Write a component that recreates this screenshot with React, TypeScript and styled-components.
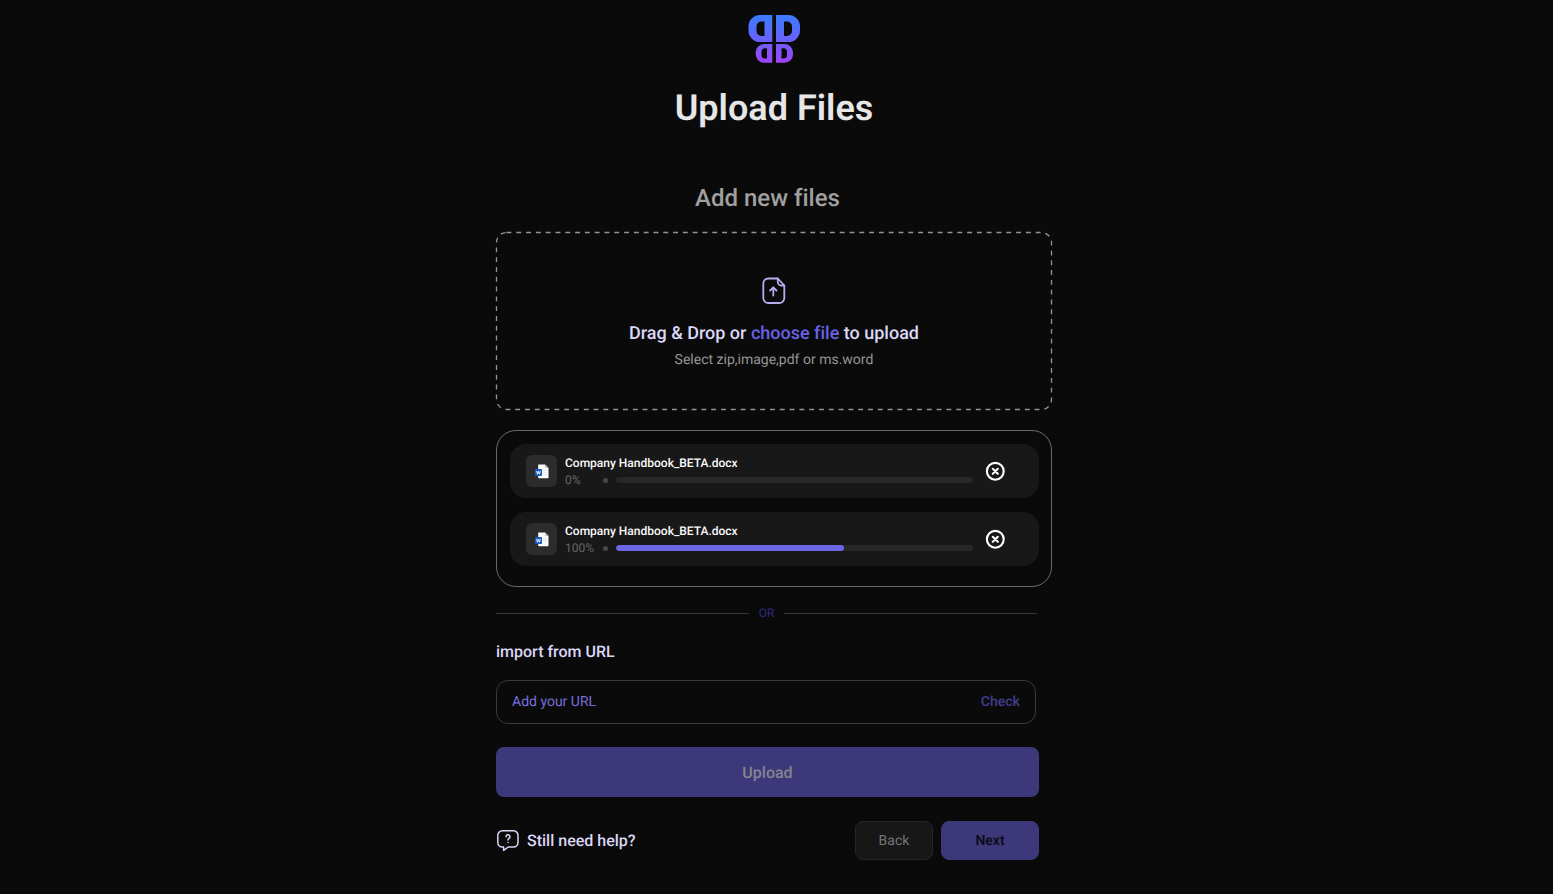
import React, { useState } from 'react';
import styled, { createGlobalStyle } from 'styled-components';

const GlobalStyle = createGlobalStyle`
  *, *::before, *::after { box-sizing: border-box; }
  body {
    margin: 0;
    background: #0a0a0a;
    font-family: Roboto, "Liberation Sans", sans-serif;
    color: #e4e4e4;
    text-rendering: geometricPrecision;
    font-variant-ligatures: none;
  }
  button, input { font-family: inherit; text-rendering: inherit; }
`;

const Page = styled.main`
  min-height: 100vh;
  padding: 15px 21px 33px 16px;
  display: flex;
  flex-direction: column;
  align-items: center;
`;

const Column = styled.div`
  width: 100%;
  max-width: 556px;
  display: flex;
  flex-direction: column;
`;

const Header = styled.header`
  display: flex;
  flex-direction: column;
  align-items: center;
  gap: 23px;
  margin-bottom: 54px;
`;

const Title = styled.h1`
  margin: 0;
  font-size: 36px;
  line-height: 44px;
  font-weight: 600;
  color: #e6e6e6;
`;

const Inset = styled.div`
  padding-right: 13px;
`;

const Subtitle = styled.h2`
  margin: 0 0 20px;
  font-size: 24px;
  line-height: 28px;
  font-weight: 500;
  text-align: center;
  color: #a0a0a0;
`;

const DropZone = styled.section`
  position: relative;
  display: flex;
  flex-direction: column;
  align-items: center;
  padding: 45px 16px 40px;
  margin-bottom: 20px;
`;

const DashedOutline = styled.svg`
  position: absolute;
  top: 0;
  left: 0;
  width: calc(100% - 1px);
  height: calc(100% - 1px);
  overflow: visible;
  pointer-events: none;
`;

const DropText = styled.p`
  margin: 17px 0 4px;
  font-size: 18px;
  line-height: 24px;
  font-weight: 500;
  color: #dcd8f8;
`;

const FileLabel = styled.label`
  color: #6a62e6;
  cursor: pointer;
`;

const HiddenFile = styled.input`
  position: absolute;
  width: 1px;
  height: 1px;
  opacity: 0;
`;

const Hint = styled.p`
  margin: 0;
  font-size: 14px;
  line-height: 20px;
  color: #949494;
`;

const FileList = styled.ul`
  list-style: none;
  margin: 0;
  padding: 13px 12px 20px 13px;
  display: flex;
  flex-direction: column;
  gap: 14px;
  border: 1px solid #6b6b6b;
  border-radius: 20px;
`;

const FileRow = styled.li`
  display: flex;
  align-items: center;
  height: 54px;
  padding: 0 33px 0 16px;
  background: #181818;
  border-radius: 16px;
`;

const FileBadge = styled.div`
  flex: none;
  display: grid;
  place-items: center;
  width: 31px;
  height: 32px;
  margin-right: 8px;
  border-radius: 6px;
  background: #2c2c2c;
`;

const FileBody = styled.div`
  flex: 1;
  min-width: 0;
`;

const FileName = styled.div`
  font-size: 12px;
  line-height: 18px;
  font-weight: 500;
  color: #fafafa;
`;

const ProgressLine = styled.div`
  display: flex;
  align-items: center;
  height: 16px;
`;

const Percent = styled.span`
  width: 38px;
  font-size: 12px;
  line-height: 16px;
  color: #666666;
`;

const Dot = styled.span`
  width: 5px;
  height: 5px;
  margin-right: 8px;
  border-radius: 50%;
  background: #484848;
`;

const Track = styled.div`
  flex: 1;
  height: 6px;
  border-radius: 3px;
  background: #272727;
  overflow: hidden;
`;

const Fill = styled.div`
  height: 100%;
  border-radius: 3px;
  background: #6a66e6;
`;

const RemoveButton = styled.button`
  flex: none;
  display: flex;
  margin-left: 11px;
  padding: 0;
  border: 0;
  background: none;
  cursor: pointer;
`;

const Divider = styled.div`
  display: flex;
  align-items: center;
  gap: 10px;
  margin: 18px 2px 19px 0;
  font-size: 12px;
  line-height: 16px;
  color: #2f2a82;

  &::before, &::after {
    content: "";
    flex: 1;
    height: 1px;
    background: #353535;
  }
`;

const UrlLabel = styled.label`
  display: block;
  margin-bottom: 16px;
  font-size: 16px;
  line-height: 24px;
  font-weight: 500;
  color: #dcd6f6;
`;

const UrlField = styled.div`
  display: flex;
  align-items: center;
  height: 44px;
  margin: 0 3px 23px 0;
  padding: 0 15px;
  border: 1px solid #3a3a3a;
  border-radius: 12px;
`;

const UrlInput = styled.input`
  flex: 1;
  min-width: 0;
  padding: 0;
  border: 0;
  outline: 0;
  background: none;
  font-size: 14px;
  line-height: 20px;
  color: #dcd6f6;

  &::placeholder { color: #766edc; opacity: 1; }
`;

const CheckButton = styled.button`
  padding: 0;
  border: 0;
  background: none;
  font-size: 14px;
  line-height: 20px;
  font-weight: 600;
  color: #3f3a86;
  cursor: pointer;
`;

const UploadButton = styled.button`
  display: block;
  width: 100%;
  height: 50px;
  margin-bottom: 24px;
  border: 0;
  border-radius: 8px;
  background: #3c387a;
  font-size: 16px;
  font-weight: 500;
  color: #85838f;
  cursor: pointer;
`;

const Footer = styled.footer`
  display: flex;
  align-items: center;
  gap: 8px;
`;

const HelpLink = styled.a`
  display: flex;
  align-items: center;
  gap: 8px;
  margin-right: auto;
  font-size: 16px;
  line-height: 24px;
  font-weight: 500;
  color: #dcd6f6;
  text-decoration: none;
`;

const NavButton = styled.button<{ $primary?: boolean }>`
  width: ${(p) => (p.$primary ? 98 : 78)}px;
  height: 39px;
  padding: 0;
  border: 1px solid ${(p) => (p.$primary ? '#3c387a' : '#262626')};
  border-radius: 8px;
  background: ${(p) => (p.$primary ? '#3c387a' : '#171717')};
  font-size: 14px;
  font-weight: ${(p) => (p.$primary ? 600 : 400)};
  color: ${(p) => (p.$primary ? '#0c0b18' : '#747474')};
  cursor: pointer;
`;

const Logo = () => (
  <svg width="52" height="48" viewBox="0 0 52 48" role="img" aria-label="Logo">
    <defs>
      <linearGradient id="mark" x1="0" y1="0" x2="0" y2="48" gradientUnits="userSpaceOnUse">
        <stop offset="0" stopColor="#3a7bff" />
        <stop offset="0.5" stopColor="#6663fb" />
        <stop offset="1" stopColor="#a043fa" />
      </linearGradient>
    </defs>
    <g fill="url(#mark)" fillRule="evenodd">
      <path d="M24.3 0V27H12A11.5 11.5 0 0 1 .5 15.500V11.500A11.500 11.500 0 0 1 12 0ZM16.500 6.500H13.500A5 5 0 0 0 8.500 11.500V16A5 5 0 0 0 13.500 21H16.500Z" />
      <path d="M28 0V27H40.500A11.500 11.500 0 0 0 52 15.500V11.500A11.500 11.500 0 0 0 40.500 0ZM36 6.500H39A5 5 0 0 1 44 11.500V16A5 5 0 0 1 39 21H36Z" />
      <path d="M24.300 29V47.700H16A8.500 8.500 0 0 1 7.700 39.200V37.500A8.500 8.500 0 0 1 16 29ZM19 33.300H17A3.500 3.500 0 0 0 13.500 36.800V40A3.500 3.500 0 0 0 17 43.500H19Z" />
      <path d="M28 29V47.700H36.500A8.500 8.500 0 0 0 45 39.200V37.500A8.500 8.500 0 0 0 36.500 29ZM33.500 33.300H35.500A3.500 3.500 0 0 1 39 36.800V40A3.500 3.500 0 0 1 35.500 43.500H33.500Z" />
    </g>
  </svg>
);

const UploadIcon = () => (
  <svg width="24" height="28" viewBox="0 0 24 28" fill="none" stroke="#b3aef0" strokeWidth="1.8" strokeLinecap="round" strokeLinejoin="round" aria-hidden="true">
    <path d="M15.800 1.500H6.300A5 5 0 0 0 1.300 6.500V21A5 5 0 0 0 6.300 26H17.300A5 5 0 0 0 22.300 21V8.500Z" />
    <path d="M15.800 1.500V5A3.500 3.500 0 0 0 19.300 8.500H22.300" />
    <path d="M11.300 18.500V10.700M8.100 13.500L11.300 10.300L14.500 13.500" />
  </svg>
);

const WordIcon = () => (
  <svg width="14" height="15" viewBox="0 0 14 15" aria-hidden="true">
    <path d="M3.200 0.500H10L13.500 4V13.500A.8.800 0 0 1 12.700 14.300H4A.8.800 0 0 1 3.200 13.500Z" fill="#fafafa" />
    <path d="M10 .5L13.500 4H10.800A.8.800 0 0 1 10 3.200Z" fill="#c4c4c4" />
    <path d="M8 6.500H12M8 8.500H12M8 10.500H12" stroke="#e8e8e8" strokeWidth="0.800" />
    <rect x="0" y="5" width="7" height="7" rx="0.800" fill="#185abd" />
    <path d="M1.600 6.900L2.500 10.200L3.500 7.300L4.500 10.200L5.400 6.900" fill="none" stroke="#fff" strokeWidth="0.900" />
  </svg>
);

const RemoveIcon = () => (
  <svg width="22" height="22" viewBox="0 0 22 22" fill="none" stroke="#fff" strokeWidth="2.100" strokeLinecap="round" aria-hidden="true">
    <circle cx="11.300" cy="11.300" r="8.400" />
    <path d="M8.800 8.800L13.800 13.800M13.800 8.800L8.800 13.800" />
  </svg>
);

const HelpIcon = () => (
  <svg width="23" height="23" viewBox="0 0 23 23" fill="none" stroke="#dcd6f6" strokeWidth="1.500" strokeLinecap="round" strokeLinejoin="round" aria-hidden="true">
    <path d="M6.300 1.800H17.500A4.500 4.500 0 0 1 22 6.300V13.500A4.500 4.500 0 0 1 17.500 18H12.300L7.600 21.400V18H6.300A4.500 4.500 0 0 1 1.800 13.500V6.300A4.500 4.500 0 0 1 6.300 1.800Z" />
    <path d="M10.100 7.800A1.900 1.900 0 1 1 13 9.300C12.300 9.800 12 10 12 11M12 13.500V13.600" />
  </svg>
);

const initialFiles = [
  { id: 1, name: 'Company Handbook_BETA.docx', percent: '0%', filled: 0 },
  { id: 2, name: 'Company Handbook_BETA.docx', percent: '100%', filled: 64 },
];

export default function App() {
  const [files, setFiles] = useState(initialFiles);
  const [url, setUrl] = useState('');

  return (
    <>
      <GlobalStyle />
      <Page>
        <Column>
          <Header>
            <Logo />
            <Title>Upload Files</Title>
          </Header>

          <Inset>
            <Subtitle>Add new files</Subtitle>
          </Inset>

          <DropZone>
            <DashedOutline aria-hidden="true">
              <rect
                x="0.5"
                y="0.5"
                width="100%"
                height="100%"
                rx="10"
                fill="none"
                stroke="#949494"
                strokeWidth="1.3"
                strokeDasharray="4.900 4.900"
              />
            </DashedOutline>
            <UploadIcon />
            <DropText>
              Drag &amp; Drop or <FileLabel htmlFor="file">choose file</FileLabel> to upload
            </DropText>
            <HiddenFile id="file" type="file" multiple />
            <Hint>Select zip,image,pdf or ms.word</Hint>
          </DropZone>

          <FileList>
            {files.map((file) => (
              <FileRow key={file.id}>
                <FileBadge>
                  <WordIcon />
                </FileBadge>
                <FileBody>
                  <FileName>{file.name}</FileName>
                  <ProgressLine>
                    <Percent>{file.percent}</Percent>
                    <Dot />
                    <Track>
                      <Fill style={{ width: `${file.filled}%` }} />
                    </Track>
                  </ProgressLine>
                </FileBody>
                <RemoveButton
                  type="button"
                  aria-label={`Remove ${file.name}`}
                  onClick={() => setFiles(files.filter((f) => f.id !== file.id))}
                >
                  <RemoveIcon />
                </RemoveButton>
              </FileRow>
            ))}
          </FileList>

          <Inset>
            <Divider>OR</Divider>
            <UrlLabel htmlFor="url">import from URL</UrlLabel>
            <UrlField>
              <UrlInput
                id="url"
                type="url"
                placeholder="Add your URL"
                value={url}
                onChange={(e) => setUrl(e.target.value)}
              />
              <CheckButton type="button">Check</CheckButton>
            </UrlField>
            <UploadButton type="button">Upload</UploadButton>
            <Footer>
              <HelpLink href="#help">
                <HelpIcon />
                Still need help?
              </HelpLink>
              <NavButton type="button">Back</NavButton>
              <NavButton type="button" $primary>
                Next
              </NavButton>
            </Footer>
          </Inset>
        </Column>
      </Page>
    </>
  );
}
